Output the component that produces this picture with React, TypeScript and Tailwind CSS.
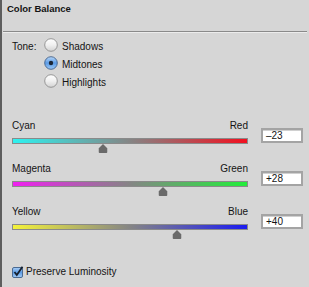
import React from "react";

type SliderRowProps = {
  left: string;
  right: string;
  value: number;
  display: string;
  gradient: string;
};

const Thumb: React.FC = () => (
  <svg width="9" height="9" viewBox="0 0 9 9">
    <path d="M4.5 0 L9 4.5 V7.8 Q9 9 7.8 9 H1.2 Q0 9 0 7.8 V4.5 Z" fill="#6a6a6a" />
  </svg>
);

const SliderRow: React.FC<SliderRowProps> = ({ left, right, value, display, gradient }) => {
  const pct = ((value + 100) / 200) * 100;
  return (
    <div className="flex h-[43px]">
      <div className="w-[236px] flex flex-col">
        <div className="flex justify-between h-[12px]">
          <span>{left}</span>
          <span>{right}</span>
        </div>
        <div className={`relative mt-[6px] h-[6px] border border-[#8a8a8a] ${gradient}`}>
          <div
            className="absolute top-[5px] -translate-x-1/2 flex"
            style={{ left: `${pct}%` }}
          >
            <Thumb />
          </div>
        </div>
      </div>
      <div className="ml-[13px] mt-[8px] w-[42px] h-[15px] bg-white border-2 border-[#a4a4a4] shadow-[inset_0_1px_0_#d0d0d0] pl-[3px] leading-[11px]">
        {display}
      </div>
    </div>
  );
};

const Radio: React.FC<{ checked?: boolean }> = ({ checked }) => (
  <svg width="14" height="14" viewBox="0 0 14 14">
    <defs>
      <linearGradient id="rOff" x1="0" y1="0" x2="0" y2="1">
        <stop offset="0" stopColor="#ffffff" />
        <stop offset="0.5" stopColor="#f0f0f0" />
        <stop offset="1" stopColor="#d2d2d2" />
      </linearGradient>
      <linearGradient id="rOn" x1="0" y1="0" x2="0" y2="1">
        <stop offset="0" stopColor="#b9d7f7" />
        <stop offset="0.5" stopColor="#5c9ce6" />
        <stop offset="1" stopColor="#9cc8f5" />
      </linearGradient>
    </defs>
    <circle
      cx="7"
      cy="7"
      r="6.3"
      fill={checked ? "url(#rOn)" : "url(#rOff)"}
      stroke={checked ? "#44628a" : "#8d8d8d"}
      strokeWidth="0.9"
    />
    {checked && <circle cx="7" cy="7" r="2.2" fill="#1b2636" />}
  </svg>
);

const Checkbox: React.FC = () => (
  <svg width="12" height="12" viewBox="0 0 12 12">
    <defs>
      <linearGradient id="cb" x1="0" y1="0" x2="0" y2="1">
        <stop offset="0" stopColor="#a9cdf4" />
        <stop offset="0.5" stopColor="#5c9ce6" />
        <stop offset="1" stopColor="#a6cdf5" />
      </linearGradient>
    </defs>
    <rect x="0.5" y="1.5" width="10" height="10" rx="1.5" fill="url(#cb)" stroke="#4a6a92" />
    <path d="M2.5 6 L4.8 9 L10.5 0.8" fill="none" stroke="#16202e" strokeWidth="1.8" />
  </svg>
);

export default function App() {
  return (
    <div className="w-[309px] h-[287px] bg-[#d6d6d6] border-l-2 border-[#5e5e5e] flex flex-col font-['Liberation_Sans',Arial,sans-serif] text-[10px] leading-[12px] text-[#141414]">
      <div className="h-[31px] pt-[3px] pl-[5px] font-bold text-[9.5px]">Color Balance</div>
      <div className="ml-[1px] mr-[2px] h-[1px] bg-[#8a8a8a]" />
      <div className="ml-[1px] mr-[2px] h-[1px] bg-[#ececec]" />

      <div className="mt-[3px] pl-[10px] flex">
        <div className="w-[32px] h-[18px] flex items-center pt-[4px]">Tone:</div>
        <div className="flex flex-col">
          {[
            { label: "Shadows", checked: false },
            { label: "Midtones", checked: true },
            { label: "Highlights", checked: false },
          ].map((r) => (
            <div key={r.label} className="h-[18px] flex items-center gap-[4px]">
              <Radio checked={r.checked} />
              <span className="pt-[4px]">{r.label}</span>
            </div>
          ))}
        </div>
      </div>

      <div className="mt-[30px] pl-[10px] flex flex-col">
        <SliderRow
          left="Cyan"
          right="Red"
          value={-23}
          display="–23"
          gradient="bg-[linear-gradient(to_right,#2ef2f0,#858585,#f2101f)]"
        />
        <SliderRow
          left="Magenta"
          right="Green"
          value={28}
          display="+28"
          gradient="bg-[linear-gradient(to_right,#f020f0,#858585,#22ee3a)]"
        />
        <SliderRow
          left="Yellow"
          right="Blue"
          value={40}
          display="+40"
          gradient="bg-[linear-gradient(to_right,#f4f23a,#858585,#1c1cf0)]"
        />
      </div>

      <div className="mt-[17px] pl-[10px] flex items-center gap-[2px] h-[12px]">
        <Checkbox />
        <span>Preserve Luminosity</span>
      </div>
    </div>
  );
}
